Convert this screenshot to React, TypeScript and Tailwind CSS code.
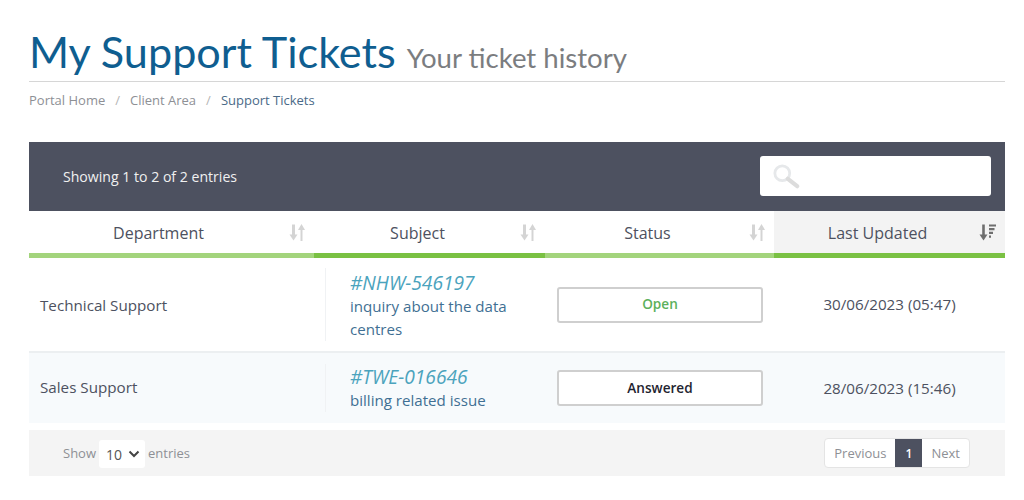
import React from "react";

function SortIcon({ active }: { active?: boolean }) {
  const c = active ? "#6e6e6e" : "#d4d4d4";
  if (active) {
    return (
      <svg width="17" height="17" viewBox="0 0 17 17" className="shrink-0">
        <path d="M4.500 0.500v11" stroke={c} strokeWidth="2.600" fill="none" />
        <path d="M0.500 10.500h8l-4 6z" fill={c} />
        <path d="M10 1.500h7M10 5.200h5.500M10 8.900h4M10 12.600h2" stroke={c} strokeWidth="2.200" fill="none" />
      </svg>
    );
  }
  return (
    <svg width="17" height="17" viewBox="0 0 17 17" className="shrink-0">
      <path d="M4.500 0.500v11" stroke={c} strokeWidth="3" />
      <path d="M0.500 10.500h8l-4 6z" fill={c} />
      <path d="M12.500 17V5" stroke={c} strokeWidth="2" />
      <path d="M9 6l3.500-6L16 6z" fill={c} />
    </svg>
  );
}

function HeaderCell({ label, width, active, dark, pad }: { label: string; width: string; active?: boolean; dark?: boolean; pad: string }) {
  return (
    <div className={`${width} h-[47px] flex flex-col ${active ? "bg-[#f3f3f3]" : "bg-white"}`}>
      <div className={`flex-1 relative flex items-center justify-center text-[16px] text-[#4d5160] pt-[2px] ${pad}`}>
        {label}
        <div className={`absolute top-[13px] ${active ? "right-[9px]" : "right-[8px]"}`}>
          <SortIcon active={active} />
        </div>
      </div>
      <div className={`h-[5px] ${dark ? "bg-[#7ac143]" : "bg-[#a3d47c]"}`} />
    </div>
  );
}

function Row({
  dept, id, subject, status, statusCls, date, cls, deptCls, subjCls,
}: {
  dept: string; id: string; subject: React.ReactNode; status: string; statusCls: string; date: string; cls: string; deptCls: string; subjCls: string;
}) {
  return (
    <div className={`flex items-center ${cls}`}>
      <div className={`w-[296px] pl-[11px] pr-[11px] text-[15.200px] text-[#4d5160] ${deptCls}`}>{dept}</div>
      <div className={`w-[220px] pl-[24px] border-l border-[#f0f2f4] text-[15.100px] leading-[23px] text-[#3f6f93] ${subjCls}`}>
        <div className="italic text-[19.200px] leading-[25px] text-[#4ba3bd]">{id}</div>
        {subject}
      </div>
      <div className="w-[229px] pl-[12px] pr-[11px]">
        <div className={`h-[36px] rounded-[3px] border-2 border-[#cfcfcf] bg-white flex items-center justify-center text-[13.600px] font-semibold ${statusCls}`}>
          {status}
        </div>
      </div>
      <div className="w-[231px] text-center text-[15.200px] text-[#4d5160]">{date}</div>
    </div>
  );
}

export default function App() {
  return (
    <div className="w-[1024px] h-[500px] bg-white overflow-hidden pl-[29px] pr-[19px] font-['Open_Sans','Noto_Sans',sans-serif]">
      <div className="h-[82px] border-b border-[#d6d6d6] flex items-baseline pt-[24px] gap-[11px]">
        <h1 className="font-['Lato',sans-serif] text-[43.200px] leading-[54px] text-[#0f5e90] font-normal">
          My Support Tickets
        </h1>
        <span className="font-['Lato',sans-serif] text-[27.600px] text-[#7b7d80]">Your ticket history</span>
      </div>

      <div className="h-[60px] pt-[8px] flex text-[13px] leading-[20px] text-[#8e9095]">
        <span>Portal Home</span>
        <span className="px-[10px] text-[#b5b5b5]">/</span>
        <span>Client Area</span>
        <span className="px-[10px] text-[#b5b5b5]">/</span>
        <span className="text-[#4a6a88]">Support Tickets</span>
      </div>

      <div className="h-[69px] bg-[#4d5160] flex items-center justify-between pl-[34px] pr-[14px] pb-[1px]">
        <span className="text-[14.100px] text-[#f0f0f0] pt-[2px]">Showing 1 to 2 of 2 entries</span>
        <div className="w-[231px] h-[40px] bg-white rounded-[3px] flex items-center pl-[12px]">
          <svg width="28" height="26" viewBox="0 0 30 28" fill="none">
            <circle cx="11" cy="11" r="8" stroke="#e6e8ea" strokeWidth="3" />
            <path d="M17 17l10 8" stroke="#dcdcdc" strokeWidth="4.500" strokeLinecap="round" />
          </svg>
        </div>
      </div>

      <div className="flex">
        <HeaderCell label="Department" width="w-[285px]" pad="pr-[26px]" />
        <HeaderCell label="Subject" width="w-[231px]" dark pad="pr-[24px]" />
        <HeaderCell label="Status" width="w-[229px]" pad="pr-[24px]" />
        <HeaderCell label="Last Updated" width="w-[231px]" active dark pad="pr-[24px]" />
      </div>

      <Row
        cls="h-[95px] bg-white border-b-2 border-[#eceff1]"
        deptCls="pt-[2px]"
        subjCls="pt-[2px]"
        dept="Technical Support"
        id="#NHW-546197"
        subject={<>inquiry about the data<br />centres</>}
        status="Open"
        statusCls="text-[#5cb05c]"
        date="30/06/2023 (05:47)"
      />
      <Row
        cls="h-[70px] bg-[#f7fafc]"
        deptCls="pb-[2px]"
        subjCls=""
        dept="Sales Support"
        id="#TWE-016646"
        subject="billing related issue"
        status="Answered"
        statusCls="text-[#1f2430]"
        date="28/06/2023 (15:46)"
      />

      <div className="mt-[7px] h-[46px] bg-[#f4f4f4] flex items-center justify-between pl-[34px] pr-[35px] text-[13px] text-[#8e9095]">
        <div className="flex items-center gap-[3px]">
          <span className="pt-[2px]">Show</span>
          <div className="w-[46px] h-[28px] mt-[2px] bg-white rounded-[3px] flex items-center justify-between pl-[7px] pr-[5px] text-[14px] text-[#555]">
            <span>10</span>
            <svg width="12" height="8" viewBox="0 0 12 8" fill="none">
              <path d="M1.500 1.500L6 6l4.500-4.500" stroke="#444" strokeWidth="2" />
            </svg>
          </div>
          <span className="pt-[2px]">entries</span>
        </div>
        <div className="flex h-[30px] items-stretch rounded-[4px] border border-[#e4e4e4] bg-white overflow-hidden">
          <span className="px-[9px] flex items-center pt-[1px]">Previous</span>
          <span className="w-[27px] flex items-center justify-center bg-[#4d5160] text-white font-semibold text-[12px] pt-[1px]">1</span>
          <span className="px-[9px] flex items-center pt-[1px]">Next</span>
        </div>
      </div>
    </div>
  );
}
